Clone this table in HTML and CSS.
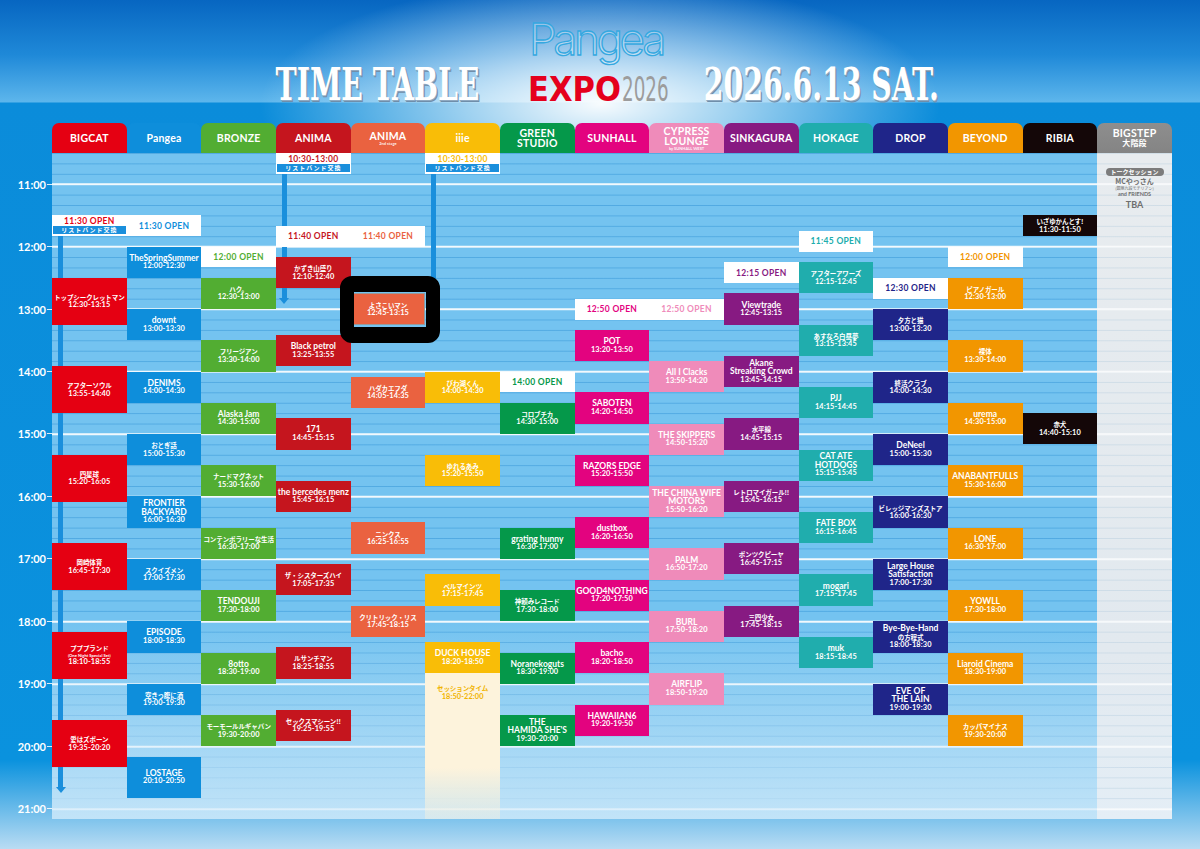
FILE: index.html
```html
<!DOCTYPE html>
<html lang="ja">
<head>
<meta charset="utf-8">
<title>Pangea EXPO 2026 TIME TABLE</title>
<link rel="stylesheet" href="styles.css">
</head>
<body>
<div class="top">
  <div class="ttl ttl-l"><span>TIME TABLE</span></div>
  <div class="logo">
    <div class="pg">Pangea</div>
    <div class="ex"><b>EXPO</b><i>2026</i></div>
  </div>
  <div class="ttl ttl-r"><span>2026.6.13 SAT.</span></div>
</div>

<div class="heads">
  <div class="hd s1">BIGCAT</div>
  <div class="hd s2">Pangea</div>
  <div class="hd s3">BRONZE</div>
  <div class="hd s4">ANIMA</div>
  <div class="hd s5">ANIMA<small>2nd stage</small></div>
  <div class="hd s6">iiie</div>
  <div class="hd s7">GREEN<br>STUDIO</div>
  <div class="hd s8">SUNHALL</div>
  <div class="hd s9">CYPRESS<br>LOUNGE<small>by SUNHALL WEST</small></div>
  <div class="hd s10">SINKAGURA</div>
  <div class="hd s11">HOKAGE</div>
  <div class="hd s12">DROP</div>
  <div class="hd s13">BEYOND</div>
  <div class="hd s14">RIBIA</div>
  <div class="hd s15">BIGSTEP<span class="jp">大階段</span></div>
</div>

<div class="body">
  <div class="lanes"></div>
  <div class="bs-col s15"></div>

  <div class="tl" style="grid-row:5/9">11:00</div>
  <div class="tl" style="grid-row:17/21">12:00</div>
  <div class="tl" style="grid-row:29/33">13:00</div>
  <div class="tl" style="grid-row:41/45">14:00</div>
  <div class="tl" style="grid-row:53/57">15:00</div>
  <div class="tl" style="grid-row:65/69">16:00</div>
  <div class="tl" style="grid-row:77/81">17:00</div>
  <div class="tl" style="grid-row:89/93">18:00</div>
  <div class="tl" style="grid-row:101/105">19:00</div>
  <div class="tl" style="grid-row:113/117">20:00</div>
  <div class="tl" style="grid-row:125/129">21:00</div>

  <div class="arrow s1" style="grid-row:17/124"></div>
  <div class="arrow s4" style="grid-row:5/30"></div>
  <div class="arrow s6" style="grid-row:5/30"></div>

  <!-- BIGCAT -->
  <div class="wb s1" style="grid-row:13/17"><b>11:30 OPEN</b><i>リストバンド交換</i></div>
  <div class="blk s1" style="grid-row:25/34"><b class="j">トップシークレットマン</b><span>12:30-13:15</span></div>
  <div class="blk s1" style="grid-row:42/51"><b class="j">アフターソウル</b><span>13:55-14:40</span></div>
  <div class="blk s1" style="grid-row:59/68"><b class="j">四星球</b><span>15:20-16:05</span></div>
  <div class="blk s1" style="grid-row:76/85"><b class="j">岡崎体育</b><span>16:45-17:30</span></div>
  <div class="blk s1" style="grid-row:93/102"><b class="j">プププランド</b><em>(One Night Special Set)</em><span>18:10-18:55</span></div>
  <div class="blk s1" style="grid-row:110/119"><b class="j">愛はズボーン</b><span>19:35-20:20</span></div>

  <!-- Pangea -->
  <div class="open s2" style="grid-row:13/17">11:30 OPEN</div>
  <div class="blk s2" style="grid-row:19/25"><b>TheSpringSummer</b><span>12:00-12:30</span></div>
  <div class="blk s2" style="grid-row:31/37"><b>downt</b><span>13:00-13:30</span></div>
  <div class="blk s2" style="grid-row:43/49"><b>DENIMS</b><span>14:00-14:30</span></div>
  <div class="blk s2" style="grid-row:55/61"><b class="j">おとぎ話</b><span>15:00-15:30</span></div>
  <div class="blk s2" style="grid-row:67/73"><b>FRONTIER<br>BACKYARD</b><span>16:00-16:30</span></div>
  <div class="blk s2" style="grid-row:79/85"><b class="j">スクイズメン</b><span>17:00-17:30</span></div>
  <div class="blk s2" style="grid-row:91/97"><b>EPISODE</b><span>18:00-18:30</span></div>
  <div class="blk s2" style="grid-row:103/109"><b class="j">空きっ腹に酒</b><span>19:00-19:30</span></div>
  <div class="blk s2" style="grid-row:117/125"><b>LOSTAGE</b><span>20:10-20:50</span></div>

  <!-- BRONZE -->
  <div class="open s3" style="grid-row:19/23">12:00 OPEN</div>
  <div class="blk s3" style="grid-row:25/31"><b class="j">ハク。</b><span>12:30-13:00</span></div>
  <div class="blk s3" style="grid-row:37/43"><b class="j">フリージアン</b><span>13:30-14:00</span></div>
  <div class="blk s3" style="grid-row:49/55"><b>Alaska Jam</b><span>14:30-15:00</span></div>
  <div class="blk s3" style="grid-row:61/67"><b class="j">ナードマグネット</b><span>15:30-16:00</span></div>
  <div class="blk s3" style="grid-row:73/79"><b class="j">コンテンポラリーな生活</b><span>16:30-17:00</span></div>
  <div class="blk s3" style="grid-row:85/91"><b>TENDOUJI</b><span>17:30-18:00</span></div>
  <div class="blk s3" style="grid-row:97/103"><b>8otto</b><span>18:30-19:00</span></div>
  <div class="blk s3" style="grid-row:109/115"><b class="j">モーモールルギャバン</b><span>19:30-20:00</span></div>

  <!-- ANIMA -->
  <div class="wb s4" style="grid-row:1/5"><b>10:30-13:00</b><i>リストバンド交換</i></div>
  <div class="open s4" style="grid-row:15/19">11:40 OPEN</div>
  <div class="blk s4" style="grid-row:21/27"><b class="j">かずき山盛り</b><span>12:10-12:40</span></div>
  <div class="blk s4" style="grid-row:36/42"><b>Black petrol</b><span>13:25-13:55</span></div>
  <div class="blk s4" style="grid-row:52/58"><b>171</b><span>14:45-15:15</span></div>
  <div class="blk s4" style="grid-row:64/70"><b>the bercedes menz</b><span>15:45-16:15</span></div>
  <div class="blk s4" style="grid-row:80/86"><b class="j">ザ・シスターズハイ</b><span>17:05-17:35</span></div>
  <div class="blk s4" style="grid-row:96/102"><b class="j">ルサンチマン</b><span>18:25-18:55</span></div>
  <div class="blk s4" style="grid-row:108/114"><b class="j">セックスマシーン!!</b><span>19:25-19:55</span></div>

  <!-- ANIMA 2nd stage -->
  <div class="open s5" style="grid-row:15/19">11:40 OPEN</div>
  <div class="blk s5 hl" style="grid-row:28/34"><b class="j">よさこいマン</b><span>12:45-13:15</span></div>
  <div class="blk s5" style="grid-row:44/50"><b class="j">ハダカエフダ</b><span>14:05-14:35</span></div>
  <div class="blk s5" style="grid-row:72/78"><b class="j">ニンクス</b><span>16:25-16:55</span></div>
  <div class="blk s5" style="grid-row:88/94"><b class="j">クリトリック・リス</b><span>17:45-18:15</span></div>

  <!-- iiie -->
  <div class="wb s6" style="grid-row:1/5"><b>10:30-13:00</b><i>リストバンド交換</i></div>
  <div class="blk s6" style="grid-row:43/49"><b class="j">びわ湖くん</b><span>14:00-14:30</span></div>
  <div class="blk s6" style="grid-row:59/65"><b class="j">ゆれるあみ</b><span>15:20-15:50</span></div>
  <div class="blk s6" style="grid-row:82/88"><b class="j">ベルマインツ</b><span>17:15-17:45</span></div>
  <div class="blk s6" style="grid-row:95/101"><b>DUCK HOUSE</b><span>18:20-18:50</span></div>
  <div class="session s6" style="grid-row:101/129"><b class="j">セッションタイム</b><span>18:50-22:00</span></div>

  <!-- GREEN STUDIO -->
  <div class="open s7" style="grid-row:43/47">14:00 OPEN</div>
  <div class="blk s7" style="grid-row:49/55"><b class="j">コロブチカ</b><span>14:30-15:00</span></div>
  <div class="blk s7" style="grid-row:73/79"><b>grating hunny</b><span>16:30-17:00</span></div>
  <div class="blk s7" style="grid-row:85/91"><b class="j">神頼みレコード</b><span>17:30-18:00</span></div>
  <div class="blk s7" style="grid-row:97/103"><b>Noranekoguts</b><span>18:30-19:00</span></div>
  <div class="blk s7" style="grid-row:109/115"><b>THE<br>HAMIDA SHE'S</b><span>19:30-20:00</span></div>

  <!-- SUNHALL -->
  <div class="open s8" style="grid-row:29/33">12:50 OPEN</div>
  <div class="blk s8" style="grid-row:35/41"><b>POT</b><span>13:20-13:50</span></div>
  <div class="blk s8" style="grid-row:47/53"><b>SABOTEN</b><span>14:20-14:50</span></div>
  <div class="blk s8" style="grid-row:59/65"><b>RAZORS EDGE</b><span>15:20-15:50</span></div>
  <div class="blk s8" style="grid-row:71/77"><b>dustbox</b><span>16:20-16:50</span></div>
  <div class="blk s8" style="grid-row:83/89"><b>GOOD4NOTHING</b><span>17:20-17:50</span></div>
  <div class="blk s8" style="grid-row:95/101"><b>bacho</b><span>18:20-18:50</span></div>
  <div class="blk s8" style="grid-row:107/113"><b>HAWAIIAN6</b><span>19:20-19:50</span></div>

  <!-- CYPRESS LOUNGE -->
  <div class="open s9" style="grid-row:29/33">12:50 OPEN</div>
  <div class="blk s9" style="grid-row:41/47"><b>All I Clacks</b><span>13:50-14:20</span></div>
  <div class="blk s9" style="grid-row:53/59"><b>THE SKIPPERS</b><span>14:50-15:20</span></div>
  <div class="blk s9" style="grid-row:65/71"><b>THE CHINA WIFE<br>MOTORS</b><span>15:50-16:20</span></div>
  <div class="blk s9" style="grid-row:77/83"><b>PALM</b><span>16:50-17:20</span></div>
  <div class="blk s9" style="grid-row:89/95"><b>BURL</b><span>17:50-18:20</span></div>
  <div class="blk s9" style="grid-row:101/107"><b>AIRFLIP</b><span>18:50-19:20</span></div>

  <!-- SINKAGURA -->
  <div class="open s10" style="grid-row:22/26">12:15 OPEN</div>
  <div class="blk s10" style="grid-row:28/34"><b>Viewtrade</b><span>12:45-13:15</span></div>
  <div class="blk s10" style="grid-row:40/46"><b>Akane<br>Streaking Crowd</b><span>13:45-14:15</span></div>
  <div class="blk s10" style="grid-row:52/58"><b class="j">水平線</b><span>14:45-15:15</span></div>
  <div class="blk s10" style="grid-row:64/70"><b class="j">レトロマイガール!!</b><span>15:45-16:15</span></div>
  <div class="blk s10" style="grid-row:76/82"><b class="j">ポンツクピーヤ</b><span>16:45-17:15</span></div>
  <div class="blk s10" style="grid-row:88/94"><b class="j">三四少女</b><span>17:45-18:15</span></div>

  <!-- HOKAGE -->
  <div class="open s11" style="grid-row:16/20">11:45 OPEN</div>
  <div class="blk s11" style="grid-row:22/28"><b class="j">アフターアワーズ</b><span>12:15-12:45</span></div>
  <div class="blk s11" style="grid-row:34/40"><b class="j">あすなろ白昼夢</b><span>13:15-13:45</span></div>
  <div class="blk s11" style="grid-row:46/52"><b>PJJ</b><span>14:15-14:45</span></div>
  <div class="blk s11" style="grid-row:58/64"><b>CAT ATE<br>HOTDOGS</b><span>15:15-15:45</span></div>
  <div class="blk s11" style="grid-row:70/76"><b>FATE BOX</b><span>16:15-16:45</span></div>
  <div class="blk s11" style="grid-row:82/88"><b>mogari</b><span>17:15-17:45</span></div>
  <div class="blk s11" style="grid-row:94/100"><b>muk</b><span>18:15-18:45</span></div>

  <!-- DROP -->
  <div class="open s12" style="grid-row:25/29">12:30 OPEN</div>
  <div class="blk s12" style="grid-row:31/37"><b class="j">夕方と猫</b><span>13:00-13:30</span></div>
  <div class="blk s12" style="grid-row:43/49"><b class="j">終活クラブ</b><span>14:00-14:30</span></div>
  <div class="blk s12" style="grid-row:55/61"><b>DeNeel</b><span>15:00-15:30</span></div>
  <div class="blk s12" style="grid-row:67/73"><b class="j">ビレッジマンズストア</b><span>16:00-16:30</span></div>
  <div class="blk s12" style="grid-row:79/85"><b>Large House<br>Satisfaction</b><span>17:00-17:30</span></div>
  <div class="blk s12" style="grid-row:91/97"><b>Bye-Bye-Hand</b><b class="j">の方程式</b><span>18:00-18:30</span></div>
  <div class="blk s12" style="grid-row:103/109"><b>EVE OF<br>THE LAIN</b><span>19:00-19:30</span></div>

  <!-- BEYOND -->
  <div class="open s13" style="grid-row:19/23">12:00 OPEN</div>
  <div class="blk s13" style="grid-row:25/31"><b class="j">ピアノガール</b><span>12:30-13:00</span></div>
  <div class="blk s13" style="grid-row:37/43"><b class="j">裸体</b><span>13:30-14:00</span></div>
  <div class="blk s13" style="grid-row:49/55"><b>urema</b><span>14:30-15:00</span></div>
  <div class="blk s13" style="grid-row:61/67"><b>ANABANTFULLS</b><span>15:30-16:00</span></div>
  <div class="blk s13" style="grid-row:73/79"><b>LONE</b><span>16:30-17:00</span></div>
  <div class="blk s13" style="grid-row:85/91"><b>YOWLL</b><span>17:30-18:00</span></div>
  <div class="blk s13" style="grid-row:97/103"><b>Liaroid Cinema</b><span>18:30-19:00</span></div>
  <div class="blk s13" style="grid-row:109/115"><b class="j">カッパマイナス</b><span>19:30-20:00</span></div>

  <!-- RIBIA -->
  <div class="blk s14" style="grid-row:13/17"><b class="j">いざゆかんとす!</b><span>11:30-11:50</span></div>
  <div class="blk s14" style="grid-row:51/57"><b class="j">赤犬</b><span>14:40-15:10</span></div>

  <!-- BIGSTEP -->
  <div class="talk s15" style="grid-row:3/13">
    <span class="pill">トークセッション</span>
    <b>MCやっさん</b>
    <small>(銀座九段モチリアン)</small>
    <em>and FRIENDS</em>
    <strong>TBA</strong>
  </div>
</div>
</body>
</html>
```
FILE: styles.css
```css
* { box-sizing: border-box; }

body {
  margin: 0;
  width: 1200px;
  height: 849px;
  overflow: hidden;
  font-family: Lato, "Noto Sans", "Noto Sans CJK JP", sans-serif;
  background:
    radial-gradient(ellipse 340px 125px at 600px 104px, rgba(255,255,255,.97) 0%, rgba(255,255,255,.6) 40%, rgba(255,255,255,0) 100%),
    linear-gradient(to bottom, #0766c1 0px, #1f89d8 55px, #5db6ec 102px, #0b8cda 103px, #0a92de 760px, #b9dcf3 849px);
}

/* ---------- title band ---------- */
.top {
  height: 103px;
  display: flex;
  justify-content: center;
  align-items: flex-end;
  padding-left: 13px;
}

.ttl {
  display: flex;
  justify-content: center;
  align-items: flex-end;
  height: 44px;
  margin-bottom: -4px;
}
.ttl-l { width: 205px; margin-right: 48px; }
.ttl-r { width: 234px; margin-left: 36px; }

.ttl span {
  display: inline-block;
  white-space: nowrap;
  font-family: "DejaVu Serif", serif;
  font-weight: bold;
  font-stretch: condensed;
  font-size: 44px;
  line-height: 44px;
  color: #fff;
  transform: scaleX(.715);
  text-shadow: 1px 1px 0 #8fa9c1, 2px 2px 0 #6f8eaa;
}

.logo {
  width: 140px;
  margin-bottom: -6px;
  display: flex;
  flex-direction: column;
  align-items: flex-start;
}
.pg {
  font-family: Inter, Lato, sans-serif;
  font-weight: 300;
  font-size: 44px;
  line-height: normal;
  letter-spacing: -3.4px;
  color: rgba(255,255,255,.35);
  -webkit-text-stroke: 1.3px #35a8e0;
  margin-left: 1px;
}
.ex {
  display: flex;
  align-items: flex-end;
  margin-top: 3px;
}
.ex b {
  font-family: "DejaVu Sans", sans-serif;
  font-stretch: condensed;
  font-weight: bold;
  font-size: 34px;
  line-height: normal;
  color: #e5001c;
}
.ex i {
  font-style: normal;
  font-family: "DejaVu Sans", sans-serif;
  font-stretch: condensed;
  font-size: 34px;
  line-height: normal;
  color: #9c9c9c;
  display: inline-block;
  margin-left: 1px;
  transform: scaleX(.6);
  transform-origin: left bottom;
}

/* ---------- stage colours ---------- */
.s1  { grid-column: 2;  --c: #e50012; }
.s2  { grid-column: 3;  --c: #0e8edb; }
.s3  { grid-column: 4;  --c: #52ad32; }
.s4  { grid-column: 5;  --c: #c5151e; }
.s5  { grid-column: 6;  --c: #ea6240; }
.s6  { grid-column: 7;  --c: #f9bd07; }
.s7  { grid-column: 8;  --c: #05984a; }
.s8  { grid-column: 9;  --c: #e3037f; }
.s9  { grid-column: 10; --c: #ef8bba; }
.s10 { grid-column: 11; --c: #871a82; }
.s11 { grid-column: 12; --c: #20adad; }
.s12 { grid-column: 13; --c: #1f2589; }
.s13 { grid-column: 14; --c: #f29600; }
.s14 { grid-column: 15; --c: #140708; }
.s15 { grid-column: 16; --c: #8a8a8a; }

/* ---------- headers ---------- */
.heads {
  display: grid;
  grid-template-columns: 52px repeat(15, 74.667px);
  height: 30px;
  margin-top: 20px;
}
.hd {
  grid-row: 1;
  background: var(--c);
  border-radius: 7px 7px 0 0;
  color: #fff;
  display: flex;
  flex-direction: column;
  align-items: center;
  justify-content: center;
  text-align: center;
  font-weight: 700;
  font-size: 10.5px;
  line-height: 10px;
  letter-spacing: .2px;
}
.hd small {
  font-size: 4px;
  line-height: 5px;
  letter-spacing: 0;
  opacity: .9;
}
.hd .jp {
  font-family: "Noto Sans CJK JP", sans-serif;
  font-size: 8px;
  line-height: 10px;
}
.hd.s15 { background: linear-gradient(#8e8e8e, #848484); }

/* ---------- body grid ---------- */
.body {
  display: grid;
  grid-template-columns: 52px repeat(15, 74.667px);
  grid-template-rows: repeat(128, 5.2083px);
}

.lanes {
  grid-column: 2 / 17;
  grid-row: 1 / -1;
  background:
    linear-gradient(to bottom, rgba(214,236,250,0) 0px, rgba(214,236,250,0) 470px, rgba(214,236,250,.8) 667px),
    linear-gradient(to bottom, rgba(255,255,255,.92) 0 2px, transparent 2px) 0 30.25px / 100% 62.5px,
    linear-gradient(to bottom, rgba(40,140,210,.45) 0 1px, transparent 1px) 0 0 / 100% 10.4167px,
    #74c3f0;
}

.bs-col {
  grid-row: 1 / -1;
  background:
    linear-gradient(to bottom, rgba(255,255,255,.8) 0 2px, transparent 2px) 0 30.25px / 100% 62.5px,
    linear-gradient(to bottom, rgba(150,185,210,.28) 0 1px, transparent 1px) 0 0 / 100% 10.4167px,
    linear-gradient(to bottom, #e8ecef, #e2e9ef 75%, #e4eef6);
}

.tl {
  grid-column: 1;
  display: flex;
  align-items: center;
  justify-content: flex-end;
  color: #fff;
  font-weight: 700;
  font-size: 11px;
}
.tl::after {
  content: "";
  width: 5px;
  height: 1px;
  margin-left: 1px;
  background: rgba(255,255,255,.85);
}

/* wristband arrows */
.arrow {
  justify-self: start;
  width: 10px;
  margin-left: 3.5px;
  display: flex;
  flex-direction: column;
  align-items: center;
}
.arrow::before {
  content: "";
  flex: 1;
  width: 5px;
  background: #1a8fdc;
}
.arrow::after {
  content: "";
  border-left: 5px solid transparent;
  border-right: 5px solid transparent;
  border-top: 6px solid #1a8fdc;
}

/* wristband box */
.wb {
  background: #fff;
  display: flex;
  flex-direction: column;
  padding: 1px 1px 2px;
  color: var(--c);
  text-align: center;
}
.wb b {
  font-size: 8.5px;
  line-height: 10px;
  letter-spacing: .3px;
}
.wb i {
  font-style: normal;
  background: #1a8fdc;
  color: #fff;
  font-family: "Noto Sans CJK JP", sans-serif;
  font-weight: 700;
  font-size: 6px;
  line-height: 8px;
  letter-spacing: 1px;
}

/* open box */
.open {
  background: #fff;
  color: var(--c);
  display: flex;
  align-items: center;
  justify-content: center;
  font-weight: 700;
  font-size: 8.5px;
  letter-spacing: .3px;
  white-space: nowrap;
}

/* performance block */
.blk {
  background: var(--c);
  color: #fff;
  display: flex;
  flex-direction: column;
  align-items: center;
  justify-content: center;
  text-align: center;
  line-height: 8.5px;
  overflow: hidden;
}
.blk b {
  font-size: 8.5px;
  font-weight: 700;
  white-space: nowrap;
}
.blk b.j, .session b.j {
  font-family: "Noto Sans CJK JP", sans-serif;
  font-size: 6.5px;
  letter-spacing: -.1px;
}
.blk span, .session span {
  font-size: 7.4px;
  font-weight: 700;
  letter-spacing: .1px;
}
.blk em {
  font-style: normal;
  font-size: 4.2px;
  line-height: 5px;
  font-weight: 700;
}

.blk.hl {
  position: relative;
  overflow: visible;
  outline: 1px solid #9a9a9a;
  outline-offset: -1px;
}
.hl::after {
  content: "";
  position: absolute;
  top: -17px;
  bottom: -18px;
  left: -11px;
  right: -15px;
  border: solid #000;
  border-width: 16px 14px 16px 14px;
  border-radius: 12px;
}

.session {
  background: linear-gradient(to bottom, #fdf3dc 0%, #fdf3dc 65%, rgba(253,243,220,.35) 100%);
  color: #f1b300;
  display: flex;
  flex-direction: column;
  align-items: center;
  text-align: center;
  padding-top: 11px;
  line-height: 8.5px;
}

/* BIGSTEP talk */
.talk {
  display: flex;
  flex-direction: column;
  align-items: center;
  padding-top: 5px;
  color: #6e6e6e;
  text-align: center;
}
.talk .pill {
  background: #7c7c7c;
  color: #fff;
  border-radius: 5px;
  font-family: "Noto Sans CJK JP", sans-serif;
  font-weight: 700;
  font-size: 6px;
  line-height: 8px;
  padding: 0 5px;
}
.talk b {
  font-family: "Noto Sans CJK JP", sans-serif;
  font-size: 7px;
  line-height: 9px;
  margin-top: 1px;
}
.talk small {
  font-family: "Noto Sans CJK JP", sans-serif;
  font-size: 4px;
  line-height: 5px;
}
.talk em {
  font-style: normal;
  font-size: 5.5px;
  line-height: 7px;
  font-weight: 700;
}
.talk strong {
  font-size: 9px;
  line-height: 11px;
  margin-top: 1px;
}
```
